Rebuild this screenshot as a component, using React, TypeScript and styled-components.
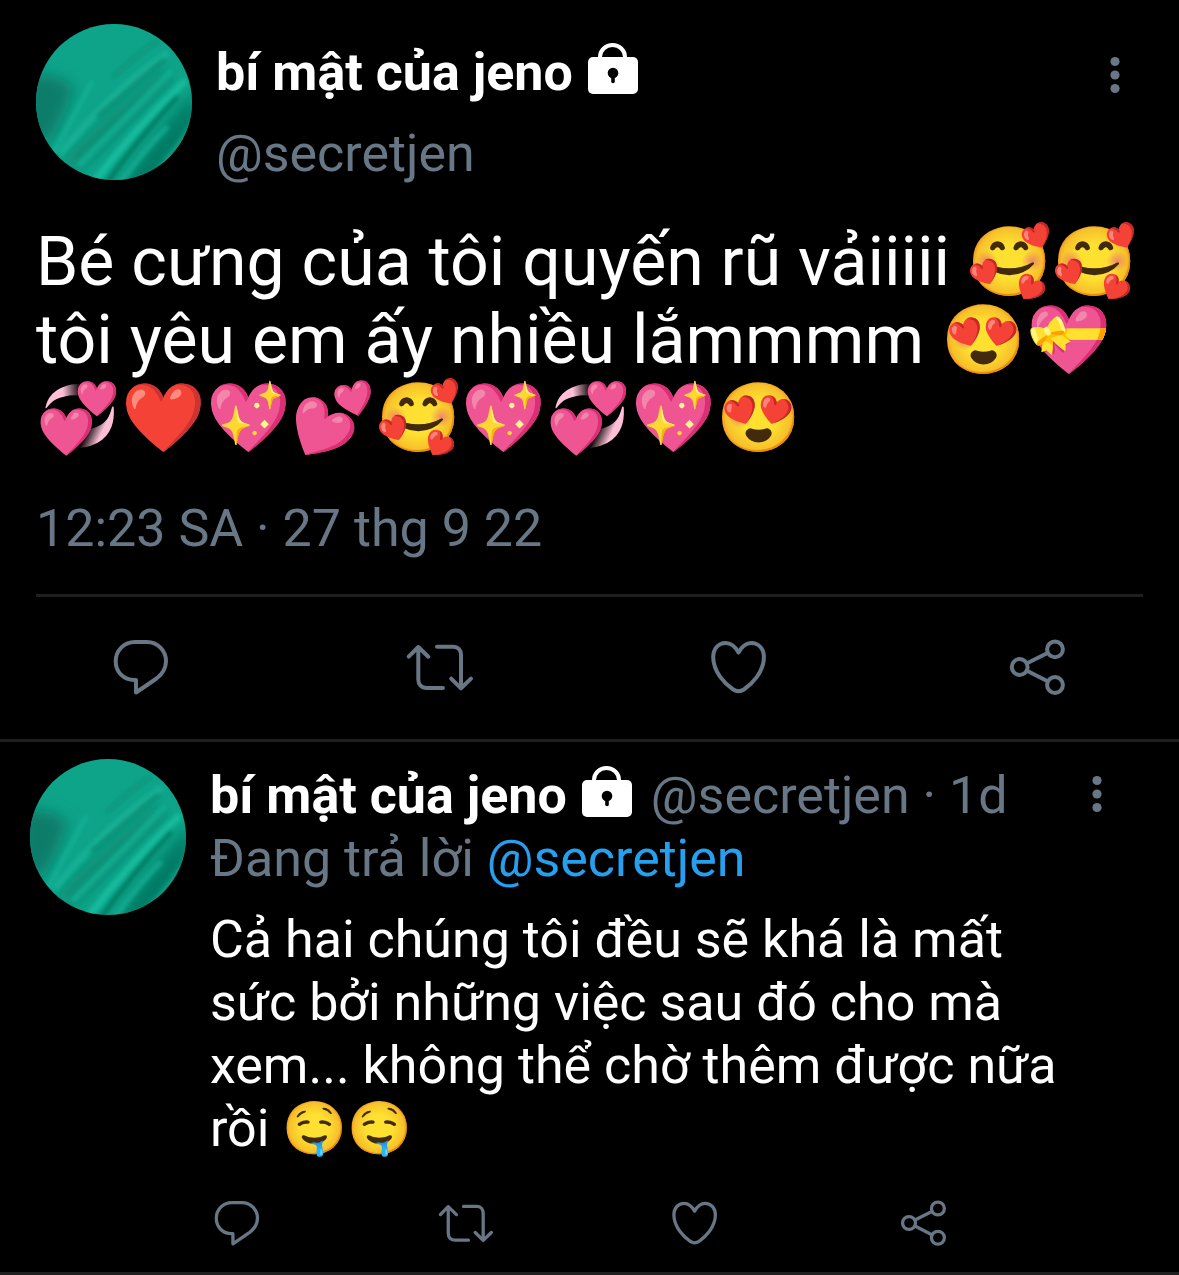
import React, { useId } from 'react';
import styled, { createGlobalStyle } from 'styled-components';

const color = {
  page: '#000000',
  text: '#ffffff',
  muted: '#687785',
  link: '#269fee',
  line: '#202020',
};

const GlobalStyle = createGlobalStyle`
  *, *::before, *::after { box-sizing: border-box; }
  body {
    margin: 0;
    background: ${color.page};
    color: ${color.text};
    font-family: Roboto, "Noto Sans", sans-serif;
    font-size: 52px;
    line-height: 63px;
  }
`;

const Thread = styled.main`
  display: flex;
  flex-direction: column;
`;

const MainTweet = styled.article`
  display: flex;
  flex-direction: column;
  padding: 24px 36px 0;
  border-bottom: 3px solid ${color.line};
`;

const MainHeader = styled.header`
  display: flex;
  align-items: flex-start;
  gap: 24px;
`;

const Author = styled.div`
  flex: 1;
  display: flex;
  flex-direction: column;
  gap: 18px;
  padding-top: 17px;
`;

const NameRow = styled.div`
  display: flex;
  align-items: flex-start;
  white-space: nowrap;
`;

const Name = styled.strong`
  font-weight: 700;
`;

const Handle = styled.a<{ $accent?: boolean }>`
  color: ${(p) => (p.$accent ? color.link : color.muted)};
  text-decoration: none;
`;

const Muted = styled.span`
  color: ${color.muted};
`;

const MainText = styled.p`
  margin: 38px 0 0;
  font-size: 68px;
  line-height: 78px;
`;

const Timestamp = styled.time`
  margin-top: 40px;
  padding-bottom: 34px;
  border-bottom: 3px solid ${color.line};
  color: ${color.muted};
`;

const MainActions = styled.div`
  display: flex;
  justify-content: space-between;
  padding: 37px 72px 39px;
`;

const Reply = styled.article`
  display: flex;
  align-items: flex-start;
  gap: 24px;
  padding: 17px 53px 22px 30px;
  border-bottom: 3px solid ${color.line};
`;

const ReplyContent = styled.div`
  flex: 1;
  min-width: 0;
  padding-top: 5px;
`;

const ReplyHeader = styled.header`
  display: flex;
  align-items: flex-start;
  justify-content: space-between;
  padding-right: 24px;
`;

const ReplyMeta = styled(Muted)`
  margin-left: 18px;
`;

const ReplyText = styled.p`
  margin: 18px 0 0;
  padding-right: 36px;
`;

const ReplyActions = styled.div`
  display: grid;
  grid-template-columns: repeat(4, 1fr);
  margin-top: 36px;
`;

const IconButton = styled.button<{ $size: number }>`
  display: block;
  width: ${(p) => p.$size}px;
  height: ${(p) => p.$size}px;
  padding: 0;
  border: 0;
  background: none;
  color: ${color.muted};
  cursor: pointer;

  svg {
    display: block;
    width: 100%;
    height: 100%;
    overflow: visible;
  }
`;

const MoreButton = styled.button<{ $offset: number; $inset: number }>`
  display: block;
  margin: ${(p) => p.$offset}px ${(p) => p.$inset}px 0 0;
  padding: 0;
  border: 0;
  background: none;
  color: ${color.muted};
  cursor: pointer;

  svg { display: block; }
`;

const LockSvg = styled.svg`
  flex: none;
  width: 52px;
  height: 52px;
  margin: 2px 0 0 14px;
`;

const AvatarSvg = styled.svg`
  flex: none;
  width: 156px;
  height: 156px;
  border-radius: 50%;
`;

function Avatar() {
  const id = useId();
  const soft = `${id}soft`;
  const wide = `${id}wide`;
  return (
    <AvatarSvg viewBox="0 0 156 156" role="img" aria-label="bí mật của jeno">
      <defs>
        <filter id={soft} x="-20%" y="-20%" width="140%" height="140%">
          <feGaussianBlur stdDeviation="2" />
        </filter>
        <filter id={wide} x="-30%" y="-30%" width="160%" height="160%">
          <feGaussianBlur stdDeviation="7" />
        </filter>
      </defs>
      <rect width="156" height="156" fill="#0ea489" />
      <g filter={`url(#${wide})`}>
        <path d="M-10 50 L18 52 L38 62 L30 86 L14 118 L-10 112 Z" fill="#0b7d6b" />
        <path d="M84 164 C104 130 132 96 160 66 V110 L120 160 Z" fill="#067c66" />
        <path d="M26 136 C60 100 92 76 126 44 L134 54 C100 92 74 116 44 148 Z" fill="#078d74" />
      </g>
      <g filter={`url(#${soft})`} fill="none" strokeLinecap="round">
        <path d="M18 128 C30 106 42 84 56 58" stroke="#15b195" strokeWidth="4" />
        <path d="M78 52 C92 40 104 28 120 18" stroke="#0b957c" strokeWidth="4" />
        <path d="M26 128 C52 96 86 60 130 30" stroke="#12b094" strokeWidth="7" />
        <path d="M62 92 C82 76 104 54 128 36" stroke="#088a71" strokeWidth="4" />
        <path d="M44 140 C76 108 104 80 134 48" stroke="#11ad91" strokeWidth="6" />
        <path d="M58 132 C82 110 108 80 136 56" stroke="#09917a" strokeWidth="3" />
        <path d="M58 158 C84 124 112 92 148 58" stroke="#14bb9d" strokeWidth="7" />
        <path d="M70 160 C90 132 114 102 140 74" stroke="#067a62" strokeWidth="5" />
        <path d="M82 162 C98 140 112 122 130 104" stroke="#13ac91" strokeWidth="5" />
        <path d="M116 158 C132 140 146 124 158 104" stroke="#0e9c82" strokeWidth="12" />
      </g>
    </AvatarSvg>
  );
}

function Lock() {
  return (
    <LockSvg viewBox="0 0 52 52" role="img" aria-label="Tài khoản được bảo vệ">
      <path d="M13 16 V14 A12.5 12 0 0 1 38 14 V16" fill="none" stroke="#fff" strokeWidth="4" />
      <rect x="1" y="14" width="50" height="37" rx="5" fill="#fff" />
      <circle cx="26" cy="30" r="5.3" fill="#000" />
      <path d="M26 31 V38.5" stroke="#000" strokeWidth="3.6" strokeLinecap="round" />
    </LockSvg>
  );
}

function More({ offset, inset = 0 }: { offset: number; inset?: number }) {
  return (
    <MoreButton $offset={offset} $inset={inset} aria-label="Thêm">
      <svg width="10" height="38" viewBox="0 0 10 38" fill="currentColor">
        <circle cx="5" cy="5.5" r="4.6" />
        <circle cx="5" cy="19" r="4.6" />
        <circle cx="5" cy="32.5" r="4.6" />
      </svg>
    </MoreButton>
  );
}

const actions = [
  {
    label: 'Trả lời',
    shape: (
      <path d="M28 46 H26.5 C15.5 46 7.7 38 7.7 27.3 S16 8 27 8 H39 C49.5 8 58 16.5 58 27 C58 34 54.5 40 48.5 44.5 C42 49 34 54.5 28 58.5 Z" />
    ),
  },
  {
    label: 'Tweet lại',
    shape: (
      <>
        <path d="M1.7 22.7 L11.3 13 L21.3 22.7 M11.3 13 V45.5 C11.3 50.5 14.5 54 19.7 54 H36" />
        <path d="M30 12.7 H46 C51 12.7 54 16 54 21 V54.3 M44.2 44.6 L54 54.3 L64 44.6" />
      </>
    ),
  },
  {
    label: 'Thích',
    shape: (
      <path d="M32.5 18.5 C29.2 12.5 25.2 9 19.7 9 C12.2 9 7.2 15 7.2 23 C7.2 38 19.2 50 27.2 55.5 Q32.5 59 37.9 55.5 C45.9 50 57.9 38 57.9 23 C57.9 15 52.9 9 45.2 9 C39.7 9 35.9 12.5 32.5 18.5 Z" />
    ),
  },
  {
    label: 'Chia sẻ',
    shape: (
      <>
        <circle cx="14.7" cy="33" r="7.9" />
        <circle cx="50" cy="15.3" r="7.9" />
        <circle cx="50" cy="51" r="7.9" />
        <path d="M22 29.3 L42.6 19 M22 36.7 L42.6 47.3" />
      </>
    ),
  },
];

function ActionButtons({ size }: { size: number }) {
  return (
    <>
      {actions.map(({ label, shape }) => (
        <IconButton key={label} $size={size} aria-label={label}>
          <svg
            viewBox="0 0 66 66"
            fill="none"
            stroke="currentColor"
            strokeWidth="4"
            strokeLinecap="round"
            strokeLinejoin="round"
          >
            {shape}
          </svg>
        </IconButton>
      ))}
    </>
  );
}

export default function App() {
  return (
    <>
      <GlobalStyle />
      <Thread>
        <MainTweet>
          <MainHeader>
            <Avatar />
            <Author>
              <NameRow>
                <Name>bí mật của jeno</Name>
                <Lock />
              </NameRow>
              <Handle href="#secretjen">@secretjen</Handle>
            </Author>
            <More offset={32} inset={23} />
          </MainHeader>
          <MainText>
            Bé cưng của tôi quyến rũ vảiiiii 🥰🥰 tôi yêu em ấy nhiều lắmmmm
            😍💝💞❤️💖💕🥰💖💞💖😍
          </MainText>
          <Timestamp dateTime="2022-09-27T00:23">12:23 SA · 27 thg 9 22</Timestamp>
          <MainActions>
            <ActionButtons size={66} />
          </MainActions>
        </MainTweet>

        <Reply>
          <Avatar />
          <ReplyContent>
            <ReplyHeader>
              <NameRow>
                <Name>bí mật của jeno</Name>
                <Lock />
                <ReplyMeta>
                  <Handle href="#secretjen">@secretjen</Handle> · 1d
                </ReplyMeta>
              </NameRow>
              <More offset={11} />
            </ReplyHeader>
            <Muted>
              Đang trả lời <Handle href="#secretjen" $accent>@secretjen</Handle>
            </Muted>
            <ReplyText>
              Cả hai chúng tôi đều sẽ khá là mất sức bởi những việc sau đó cho mà xem... không thể chờ
              thêm được nữa rồi 🤤🤤
            </ReplyText>
            <ReplyActions>
              <ActionButtons size={54} />
            </ReplyActions>
          </ReplyContent>
        </Reply>
      </Thread>
    </>
  );
}
